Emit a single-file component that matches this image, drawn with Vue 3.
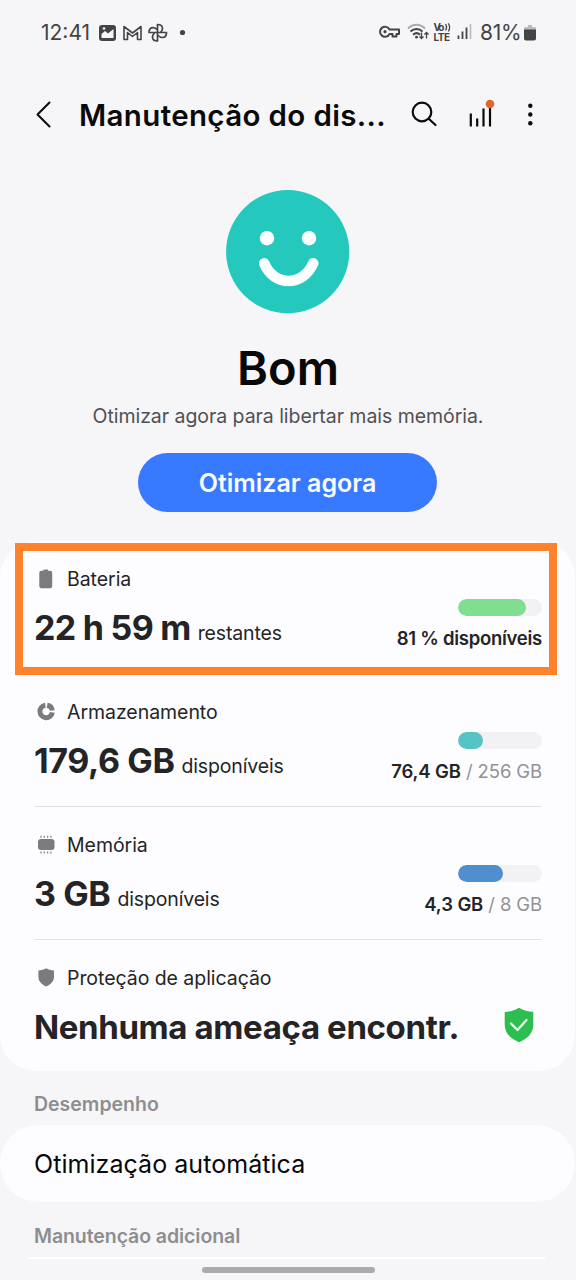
<script setup>
const rows = [
  { id: 'battery', label: 'Bateria', value: '22 h 59 m', unit: 'restantes', strong: '81 % disponíveis', muted: '', fill: 81.5, color: '#80de90' },
  { id: 'storage', label: 'Armazenamento', value: '179,6 GB', unit: 'disponíveis', strong: '76,4 GB', muted: ' / 256 GB', fill: 30, color: '#56c4c4' },
  { id: 'memory', label: 'Memória', value: '3 GB', unit: 'disponíveis', strong: '4,3 GB', muted: ' / 8 GB', fill: 54, color: '#4f8fd0' },
]
</script>

<template>
  <div class="screen">
    <header class="status">
      <span class="clock">12:41</span>
      <svg class="status-left" width="90" height="24" viewBox="98 20 90 24" fill="none">
        <rect x="99" y="25" width="17" height="16" rx="3" fill="#444" />
        <path d="M101.500 38v-4l3.500-3 3 2.500 5.500-4.500v9z" fill="#f6f6f8" />
        <circle cx="104" cy="28.500" r="1.300" fill="#f6f6f8" />
        <path d="M124 39.500V26.500l8.500 6.500 8.500-6.500v13h-3.500v-7l-5 4-5-4v7z" stroke="#444" stroke-width="1.600" stroke-linejoin="round" />
        <g stroke="#444" stroke-width="1.700" stroke-linejoin="round">
          <path d="M157.500 32.500v-8c3.500 0 5 2 5 4 0 1.500-1 3-2 4" />
          <path d="M157.500 32.500h9c0 3.300-2 5-4.200 5-1.800 0-3.300-1-4.800-2.500" />
          <path d="M157.500 32.500v8.500c-3.500 0-5-2-5-4 0-1.600 1-3 2-4.200" />
          <path d="M157.500 32.500h-8.500c0-3.300 2-4.800 4.200-4.800 1.800 0 3.300 1 4.300 2.300" />
        </g>
        <circle cx="182.500" cy="32.500" r="2.600" fill="#444" />
      </svg>
      <svg class="status-right" width="98" height="26" viewBox="378 20 98 26" fill="none">
        <path d="M389.500 30.500a5 5 0 1 0 0 4.500h3v2.500h4V35h2.500v-4.500z" stroke="#444" stroke-width="2" stroke-linejoin="round" />
        <circle cx="385" cy="32.700" r="1.600" fill="#444" />
        <path d="M408 29.500c5-5 12-5 17 0" stroke="#aaa" stroke-width="2" />
        <path d="M410.500 32.500c3.500-3.200 8.500-3.200 12 0M413 35.800c2.300-2 5-2 7 0" stroke="#444" stroke-width="2" />
        <circle cx="416.500" cy="38.200" r="1.400" fill="#444" />
        <path d="M421.500 33.500v6m-2-2 2 2 2-2M426.500 39.500v-6m-2 2 2-2 2 2" stroke="#444" stroke-width="1.300" />
        <text x="433.500" y="32" class="volte" textLength="11">Vo</text>
        <path d="M445.500 25c1.300 2 1.300 4.500 0 6.500M448.300 24.300c1.700 2.500 1.700 5.500 0 8" stroke="#444" stroke-width="1.300" />
        <text x="433.500" y="41.500" class="volte" textLength="16.500">LTE</text>
        <path d="M458.500 36.500v3.500M462.500 32.500v7.500M466.500 28.500v11.500" stroke="#444" stroke-width="1.800" />
        <path d="M470.500 25v15" stroke="#bbb" stroke-width="1.600" />
      </svg>
      <span class="percent">81%</span>
      <svg class="status-battery" width="12" height="18" viewBox="0 0 12 18">
        <path d="M4 1h4v2h2.500a1.500 1.500 0 0 1 1.500 1.500V6H0V4.500A1.500 1.500 0 0 1 1.500 3H4z" fill="#bbb" />
        <path d="M0 5.500h12v9a2 2 0 0 1-2 2H2a2 2 0 0 1-2-2z" fill="#444" />
      </svg>
    </header>

    <nav class="bar">
      <svg class="back" width="18" height="30" viewBox="0 0 18 30" fill="none">
        <path d="M14.500 3.500 2.500 15.500l12 12" stroke="#0a0a0a" stroke-width="2" stroke-linecap="round" stroke-linejoin="round" />
      </svg>
      <h1 class="title">Manutenção do dis...</h1>
      <svg class="actions" width="130" height="34" viewBox="410 97 130 34" fill="none">
        <g stroke="#0a0a0a" stroke-width="2.200" stroke-linecap="round">
          <circle cx="422" cy="112" r="9.300" />
          <path d="m429 119 6.500 6" />
        </g>
        <path d="M470.800 113.500v13M477.200 118.500v8M483.500 108.500v18M490 107v19.500" stroke="#0a0a0a" stroke-width="2.200" />
        <circle cx="490" cy="104" r="4.300" fill="#e0662a" />
        <g fill="#0a0a0a">
          <circle cx="530.300" cy="105.700" r="2.200" />
          <circle cx="530.300" cy="114.500" r="2.200" />
          <circle cx="530.300" cy="123.300" r="2.200" />
        </g>
      </svg>
    </nav>

    <section class="hero">
      <svg class="face" width="124" height="124" viewBox="0 0 124 124">
        <circle cx="61.700" cy="61.700" r="61.600" fill="#24c8bc" />
        <circle cx="41" cy="48.200" r="7.200" fill="#fcfeff" />
        <circle cx="83" cy="48.200" r="7.200" fill="#fcfeff" />
        <path d="M38.200 73.300c10 23.500 38.500 23.500 49 0" fill="none" stroke="#fcfeff" stroke-width="10.600" stroke-linecap="round" />
      </svg>
      <h2 class="state">Bom</h2>
      <p class="hint">Otimizar agora para libertar mais memória.</p>
      <button class="optimize"><span>Otimizar agora</span></button>
    </section>

    <main class="card">
      <article v-for="row in rows" :key="row.id" class="row" :class="row.id">
        <div class="info">
          <div class="label">
            <svg width="18" height="20" viewBox="0 0 18 20" fill="#7b7b7d">
              <path v-if="row.id === 'battery'" d="M6.500.500h4.500v1.300h2.200a2 2 0 0 1 2 2V17a2.200 2.200 0 0 1-2.200 2.200H4.500A2.200 2.200 0 0 1 2.300 17V3.800a2 2 0 0 1 2-2h2.200z" />
              <g v-else-if="row.id === 'storage'" fill="none" stroke="#7b7b7d" stroke-width="5">
                <path d="M8.400 3.300A6.200 6.200 0 1 0 15.300 10.400" />
                <path d="M10.200 3.300A6.200 6.200 0 0 1 15.300 8.500" />
              </g>
              <g v-else>
                <rect x="1" y="4" width="16.500" height="11" rx="3" />
                <path d="M4 .700v2M7.300.700v2M10.600.700v2M13.900.700v2M4 16.500v2M7.300 16.500v2M10.600 16.500v2M13.900 16.500v2" stroke="#8a8a8c" stroke-width="1.300" />
              </g>
            </svg>
            <span>{{ row.label }}</span>
          </div>
          <div class="amount"><strong>{{ row.value }}</strong><span>{{ row.unit }}</span></div>
        </div>
        <div class="usage">
          <div class="meter"><i :style="{ width: row.fill + '%', background: row.color }"></i></div>
          <div class="detail"><b>{{ row.strong }}</b><span v-if="row.muted">{{ row.muted }}</span></div>
        </div>
      </article>
      <article class="row protection">
        <div class="info">
          <div class="label">
            <svg width="18" height="20" viewBox="0 0 18 20" fill="#7b7b7d">
              <path d="M9.200.300c2.500 1.500 5 2 7.800 2.200V9c0 4.300-3.300 7.500-7.800 9.500C4.700 16.500 1.400 13.300 1.400 9V2.500c2.800-.2 5.300-.7 7.800-2.200z" />
            </svg>
            <span>Proteção de aplicação</span>
          </div>
          <div class="amount"><strong>Nenhuma ameaça encontr.</strong></div>
        </div>
        <svg class="shield" width="30" height="36" viewBox="0 0 30 36">
          <path d="M15 .700c4.500 2.800 9 3.900 14.300 4.300v12.500C29.300 26 24 31.500 15 35.300 6 31.500.700 26 .700 17.500V5C6 4.600 10.500 3.500 15 .700z" fill="#2dbe50" />
          <path d="m7 16.500 6.500 6.500 9-10" fill="none" stroke="#effff2" stroke-width="2.200" stroke-linecap="round" stroke-linejoin="round" />
        </svg>
      </article>
      <div class="highlight"></div>
    </main>

    <h3 class="section performance">Desempenho</h3>
    <div class="card single"><span>Otimização automática</span></div>
    <h3 class="section extra">Manutenção adicional</h3>
    <div class="next"></div>
    <div class="handle"></div>
  </div>
</template>

<style>
body {
  background: #f6f6f8;
}
</style>

<style scoped>
.screen {
  width: 576px;
  height: 1280px;
  overflow: hidden;
  background: #f6f6f8;
  color: #242426;
  font-family: Inter, "Liberation Sans", sans-serif;
  white-space: nowrap;
}
h1, h2, h3, p {
  margin: 0;
}
svg {
  display: block;
  flex: none;
}
.status {
  display: flex;
  align-items: center;
  height: 64px;
  padding-left: 41px;
  color: #444;
  font-size: 21px;
}
.clock {
  width: 57px;
}
.status-right {
  margin-left: 190px;
}
.volte {
  fill: #444;
  font-size: 10px;
  font-weight: 700;
}
.percent {
  width: 44px;
  margin-left: 4px;
  letter-spacing: -0.3px;
}
.status-battery {
  margin-top: 1px;
}
.bar {
  display: flex;
  align-items: center;
  height: 99px;
  padding: 1px 0 0 35px;
}
.back {
  margin-top: -2px;
}
.title {
  width: 331px;
  margin-left: 26px;
  color: #0a0a0a;
  font-size: 29.500px;
  font-weight: 600;
  letter-spacing: 0.350px;
}
.actions {
  margin-top: -1px;
}
.hero {
  display: flex;
  flex-direction: column;
  align-items: center;
  padding-top: 26px;
}
.state {
  margin-top: 24px;
  color: #080808;
  font-size: 47px;
  font-weight: 600;
  line-height: 60px;
}
.hint {
  margin-top: 5px;
  color: #505054;
  font-size: 19.500px;
  letter-spacing: -0.050px;
  line-height: 26px;
}
.optimize {
  width: 299px;
  height: 59px;
  margin: 24px 1px 0 0;
  padding: 1px 0 0;
  border: 0;
  border-radius: 30px;
  background: #387aff;
  color: #fafcff;
  font: 600 25px/58px Inter, sans-serif;
}
.card {
  position: relative;
  width: 575px;
  height: 530px;
  margin-top: 29px;
  border-radius: 36px;
  background: #fdfdff;
}
.row {
  display: flex;
  box-sizing: border-box;
  height: 133px;
  margin: 0 33px 0 34px;
  justify-content: space-between;
}
.storage, .memory {
  border-bottom: 1.500px solid #e2e2e5;
}
.info {
  padding-top: 25px;
}
.label {
  display: flex;
  align-items: center;
  gap: 12px;
  height: 26px;
  padding-left: 3px;
  font-size: 19.500px;
  letter-spacing: -0.050px;
}
.amount {
  display: flex;
  align-items: baseline;
  gap: 7px;
  margin-top: 13px;
  font-size: 19.500px;
  letter-spacing: -0.150px;
  line-height: 46px;
}
.amount strong {
  font-size: 34px;
  font-weight: 700;
  letter-spacing: -0.400px;
}
.battery strong {
  letter-spacing: -0.700px;
}
.protection strong {
  font-size: 33px;
  letter-spacing: -0.370px;
}
.usage {
  display: flex;
  flex-direction: column;
  align-items: flex-end;
  padding-top: 58px;
}
.meter {
  width: 84px;
  height: 17px;
  overflow: hidden;
  border-radius: 9px;
  background: #f2f2f4;
}
.meter i {
  display: block;
  height: 100%;
  border-radius: 9px;
}
.detail {
  margin-top: 9px;
  font-size: 18.500px;
  letter-spacing: -0.120px;
  line-height: 26px;
  white-space: pre;
}
.battery .detail {
  letter-spacing: -0.270px;
}
.detail b {
  font-weight: 600;
}
.detail span {
  color: #929295;
}
.shield {
  margin: 67px 8px 0 0;
}
.highlight {
  position: absolute;
  top: 2px;
  left: 15px;
  box-sizing: border-box;
  width: 542px;
  height: 132px;
  border: 8px solid #ff822c;
}
.section {
  height: 26px;
  margin-left: 34px;
  color: #8e8e91;
  font-size: 19.500px;
  font-weight: 600;
  line-height: 26px;
}
.performance {
  margin-top: 20px;
}
.single {
  box-sizing: border-box;
  height: 77px;
  margin-top: 8px;
  padding-left: 34px;
  border-radius: 39px;
  color: #080808;
  font-size: 25px;
  letter-spacing: 0.050px;
  line-height: 79px;
}
.extra {
  margin-top: 21px;
  letter-spacing: -0.080px;
}
.next {
  width: 518px;
  height: 2px;
  margin: 8px 0 0 28px;
  border-radius: 1px;
  background: #fefeff;
}
.handle {
  width: 173px;
  height: 6px;
  margin: 8px 0 0 202px;
  border-radius: 3px;
  background: #ababad;
}
</style>
